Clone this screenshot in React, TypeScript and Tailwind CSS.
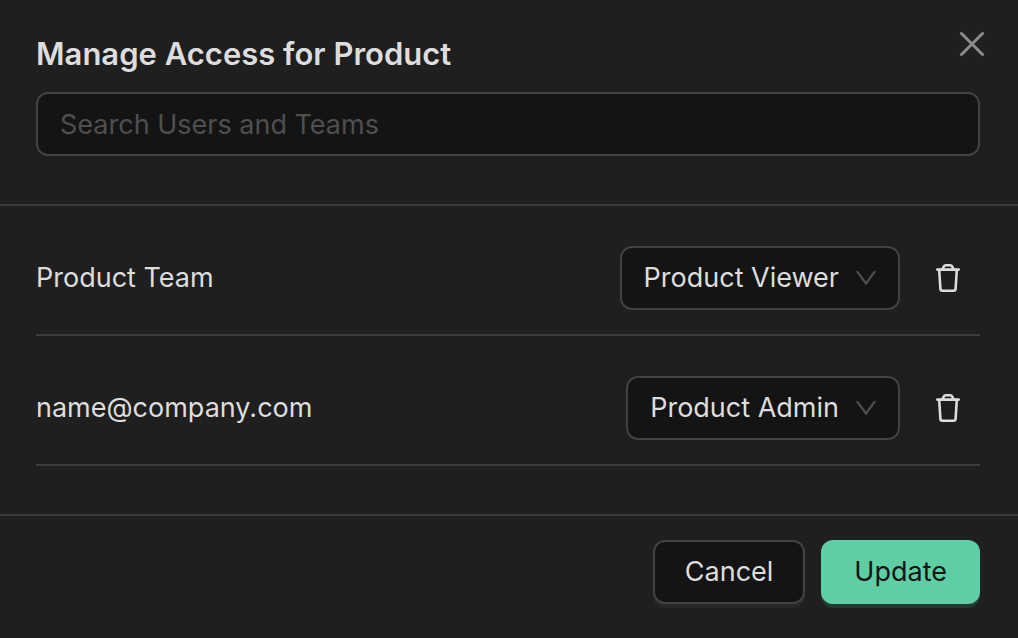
import React, { useState } from 'react';

type Member = {
  id: string;
  name: string;
  role: string;
};

const ROLES = ['Product Viewer', 'Product Admin'];

const INITIAL_MEMBERS: Member[] = [
  { id: 'team', name: 'Product Team', role: 'Product Viewer' },
  { id: 'user', name: 'name@company.com', role: 'Product Admin' },
];

const CloseIcon: React.FC = () => (
  <svg width="28" height="28" viewBox="0 0 28 28" fill="none" stroke="currentColor" strokeWidth="2.9" aria-hidden="true">
    <path d="M2.5 2.5l23 23M25.5 2.5l-23 23" />
  </svg>
);

const ChevronIcon: React.FC = () => (
  <svg
    width="24"
    height="24"
    viewBox="64 64 896 896"
    fill="currentColor"
    aria-hidden="true"
    className="pointer-events-none absolute right-[22px] top-5 text-[#4f4f4f]"
  >
    <path d="M884 256h-75c-5.1 0-9.9 2.5-12.9 6.6L512 654.2 227.9 262.6c-3-4.1-7.8-6.6-12.9-6.6h-75c-6.5 0-10.3 7.4-6.5 12.7l352.6 486.1c12.8 17.6 39 17.6 51.7 0l352.6-486.1c3.9-5.3.1-12.7-6.4-12.7z" />
  </svg>
);

const TrashIcon: React.FC = () => (
  <svg
    width="24"
    height="28"
    viewBox="0 0 24 28"
    fill="none"
    stroke="currentColor"
    strokeWidth="2.6"
    strokeLinecap="round"
    strokeLinejoin="round"
    aria-hidden="true"
  >
    <path d="M1.3 5.6h21.4" />
    <path d="M6.4 5.4L7.5 3Q8.3 1.3 10 1.3h4q1.7 0 2.5 1.7l1.1 2.4" />
    <path d="M3.2 5.8l1.2 18.9q.1 2 2 2h11.2q1.9 0 2-2l1.2-18.9" />
  </svg>
);

export default function App() {
  const [search, setSearch] = useState('');
  const [members, setMembers] = useState<Member[]>(INITIAL_MEMBERS);

  const changeRole = (id: string, role: string) => {
    setMembers(members.map((m) => (m.id === id ? { ...m, role } : m)));
  };

  const removeMember = (id: string) => {
    setMembers(members.filter((m) => m.id !== id));
  };

  return (
    <div
      role="dialog"
      aria-labelledby="dialog-title"
      className="min-h-screen bg-[#1f1f1f] font-['Inter','Liberation_Sans',sans-serif] text-[27px] leading-10 text-[#dddddd]"
    >
      {/* Header */}
      <header className="relative border-b-2 border-[#3a3a3a] pt-[34px] pr-[38px] pb-12 pl-9">
        <h1 id="dialog-title" className="mb-[18px] text-[31px] leading-10 font-semibold">
          Manage Access for Product
        </h1>
        <button type="button" aria-label="Close" className="absolute top-[30px] right-8 text-[#8c8c8c] hover:text-white">
          <CloseIcon />
        </button>
        <input
          type="text"
          aria-label="Search Users and Teams"
          placeholder="Search Users and Teams"
          value={search}
          onChange={(e) => setSearch(e.target.value)}
          className="block h-16 w-full rounded-xl border-2 border-[#424242] bg-[#141414] px-[22px] placeholder:text-[#4f4f4f] outline-none"
        />
      </header>

      {/* Members */}
      <ul className="pr-[38px] pb-12 pl-9">
        {members.map((member) => (
          <li key={member.id} className="flex items-center gap-4 border-b-2 border-[#3a3a3a] pt-10 pb-6">
            <label htmlFor={`role-${member.id}`} className="flex-1">
              {member.name}
            </label>
            <div className="relative">
              <select
                id={`role-${member.id}`}
                value={member.role}
                onChange={(e) => changeRole(member.id, e.target.value)}
                className="block h-16 appearance-none rounded-xl border-2 border-[#424242] bg-[#141414] pr-[59px] pl-[22px] outline-none [field-sizing:content]"
              >
                {ROLES.map((role) => (
                  <option key={role}>{role}</option>
                ))}
              </select>
              <ChevronIcon />
            </div>
            <button
              type="button"
              aria-label={`Remove ${member.name}`}
              onClick={() => removeMember(member.id)}
              className="flex size-16 items-center justify-center hover:text-white"
            >
              <TrashIcon />
            </button>
          </li>
        ))}
      </ul>

      {/* Actions */}
      <footer className="flex justify-end gap-4 border-t-2 border-[#3a3a3a] pt-6 pr-[38px] pb-8 pl-9">
        <button
          type="button"
          className="h-16 rounded-xl border-2 border-[#424242] bg-[#141414] px-[30px] shadow-[0_4px_0_rgba(255,255,255,0.04)]"
        >
          Cancel
        </button>
        <button type="button" className="h-16 rounded-xl bg-[#5fcea5] px-[33px] text-[#141414] shadow-[0_4px_0_#213a31]">
          Update
        </button>
      </footer>
    </div>
  );
}
